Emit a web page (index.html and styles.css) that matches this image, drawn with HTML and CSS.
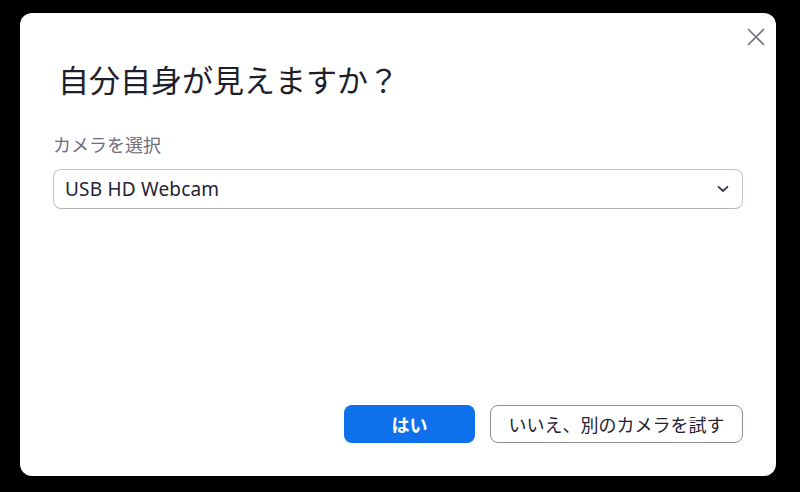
FILE: index.html
```html
<!DOCTYPE html>
<html lang="ja">
<head>
    <meta charset="UTF-8">
    <meta name="viewport" content="width=device-width, initial-scale=1.0">
    <title>カメラの確認</title>
    <link rel="stylesheet" href="styles.css">
</head>
<body>
    <div class="dialog">
        <button class="close-btn" type="button" aria-label="閉じる">
            <svg width="18" height="18" viewBox="0 0 18 18">
                <path d="M1.5 1.5 L16.5 16.5 M16.5 1.5 L1.5 16.5" stroke="#6f6f80" stroke-width="1.7" fill="none" stroke-linecap="round"/>
            </svg>
        </button>

        <h1 class="title">自分自身が見えますか？</h1>

        <label class="field-label" for="camera">カメラを選択</label>
        <div class="select">
            <span class="select-value">USB HD Webcam</span>
            <svg class="chevron" width="12" height="8" viewBox="0 0 12 8">
                <path d="M1.5 1.8 L6 6 L10.5 1.8" stroke="#3a3a48" stroke-width="1.8" fill="none" stroke-linecap="round" stroke-linejoin="round"/>
            </svg>
        </div>

        <div class="actions">
            <button class="btn btn-primary" type="button">はい</button>
            <button class="btn btn-secondary" type="button">いいえ、別のカメラを試す</button>
        </div>
    </div>
</body>
</html>
```

FILE: styles.css
```css
/* Basic reset */
* {
    box-sizing: border-box;
    margin: 0;
    padding: 0;
}

body {
    width: 800px;
    height: 492px;
    background: #000;
    padding: 13px 24px 16px 20px;
    font-family: "Noto Sans", "Noto Sans CJK JP", sans-serif;
    color: #232333;
    overflow: hidden;
}

.dialog {
    position: relative;
    width: 756px;
    height: 463px;
    background: #fff;
    border-radius: 12px;
    padding: 0 33px 33px 33px;
    display: flex;
    flex-direction: column;
}

/* close "x" in the corner */
.close-btn {
    position: absolute;
    top: 8px;
    right: 4px;
    width: 32px;
    height: 32px;
    border: none;
    background: transparent;
    display: flex;
    align-items: center;
    justify-content: center;
    cursor: pointer;
}

.title {
    margin-top: 46px;
    margin-left: 5px;
    font-size: 31px;
    font-weight: 400;
    line-height: 42px;
    color: #1f1f2b;
}

.field-label {
    display: block;
    margin-top: 32px;
    font-size: 18px;
    line-height: 24px;
    color: #6e6e7e;
}

.select {
    margin-top: 12px;
    height: 40px;
    border: 1px solid #c6c5d1;
    border-bottom-color: #b4b3c0;
    border-radius: 8px;
    display: flex;
    align-items: center;
    justify-content: space-between;
    padding: 0 13px 0 11px;
}

.select-value {
    font-size: 19px;
    letter-spacing: 0.2px;
    color: #232333;
}

.actions {
    margin-top: auto;
    display: flex;
    justify-content: flex-end;
    gap: 15px;
}

.btn {
    height: 38px;
    border-radius: 8px;
    font-family: inherit;
    font-size: 18px;
    cursor: pointer;
}

.btn-primary {
    width: 131px;
    background: #0e71eb;
    border: none;
    color: #fff;
    font-weight: 700;
}

.btn-secondary {
    width: 253px;
    background: #fff;
    border: 1px solid #8c8c96;
    color: #232333;
}
```
